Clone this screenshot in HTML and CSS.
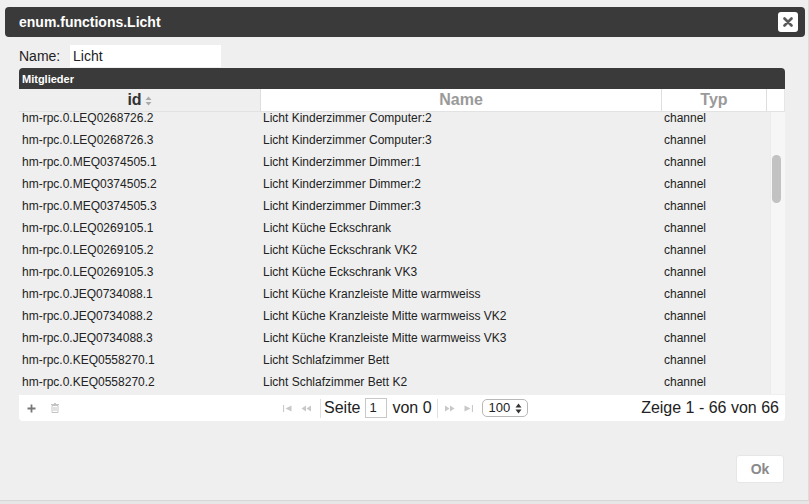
FILE: index.html
```html
<!DOCTYPE html>
<html>
<head>
<meta charset="utf-8">
<link rel="stylesheet" href="styles.css">
</head>
<body>
<div class="dialog">
  <div class="titlebar">
    <span class="title">enum.functions.Licht</span>
    <button class="close" aria-label="close">
      <svg width="10" height="10" viewBox="0 0 10 10"><path d="M1.5 1.5 L8.5 8.5 M8.5 1.5 L1.5 8.5" stroke="#5a5a5a" stroke-width="2.6" stroke-linecap="round"/></svg>
    </button>
  </div>
  <div class="content">
    <div class="name-row">
      <label class="name-label">Name:</label>
      <div class="name-input">Licht</div>
    </div>
    <div class="grid">
      <div class="caption">Mitglieder</div>
      <div class="head">
        <div class="hcell hid">id<svg class="sort" width="7" height="10" viewBox="0 0 7 10"><path d="M0.5 4 L3.5 0.5 L6.5 4 Z M0.5 6 L3.5 9.5 L6.5 6 Z" fill="#aaa"/></svg></div>
        <div class="hcell">Name</div>
        <div class="hcell">Typ</div>
        <div class="hcell hlast"></div>
      </div>
      <div class="body">
        <div class="rows">
          <div class="rows-inner">
            <div class="row"><span>hm-rpc.0.LEQ0268726.2</span><span>Licht Kinderzimmer Computer:2</span><span>channel</span></div>
            <div class="row"><span>hm-rpc.0.LEQ0268726.3</span><span>Licht Kinderzimmer Computer:3</span><span>channel</span></div>
            <div class="row"><span>hm-rpc.0.MEQ0374505.1</span><span>Licht Kinderzimmer Dimmer:1</span><span>channel</span></div>
            <div class="row"><span>hm-rpc.0.MEQ0374505.2</span><span>Licht Kinderzimmer Dimmer:2</span><span>channel</span></div>
            <div class="row"><span>hm-rpc.0.MEQ0374505.3</span><span>Licht Kinderzimmer Dimmer:3</span><span>channel</span></div>
            <div class="row"><span>hm-rpc.0.LEQ0269105.1</span><span>Licht Küche Eckschrank</span><span>channel</span></div>
            <div class="row"><span>hm-rpc.0.LEQ0269105.2</span><span>Licht Küche Eckschrank VK2</span><span>channel</span></div>
            <div class="row"><span>hm-rpc.0.LEQ0269105.3</span><span>Licht Küche Eckschrank VK3</span><span>channel</span></div>
            <div class="row"><span>hm-rpc.0.JEQ0734088.1</span><span>Licht Küche Kranzleiste Mitte warmweiss</span><span>channel</span></div>
            <div class="row"><span>hm-rpc.0.JEQ0734088.2</span><span>Licht Küche Kranzleiste Mitte warmweiss VK2</span><span>channel</span></div>
            <div class="row"><span>hm-rpc.0.JEQ0734088.3</span><span>Licht Küche Kranzleiste Mitte warmweiss VK3</span><span>channel</span></div>
            <div class="row"><span>hm-rpc.0.KEQ0558270.1</span><span>Licht Schlafzimmer Bett</span><span>channel</span></div>
            <div class="row"><span>hm-rpc.0.KEQ0558270.2</span><span>Licht Schlafzimmer Bett K2</span><span>channel</span></div>
          </div>
        </div>
        <div class="scrollbar"><div class="thumb"></div></div>
      </div>
      <div class="footer">
        <div class="foot-left">
          <svg class="plus" width="9" height="9" viewBox="0 0 9 9"><path d="M4.5 0.5 V8.5 M0.5 4.5 H8.5" stroke="#777" stroke-width="1.8"/></svg>
          <svg class="trash" width="8" height="10" viewBox="0 0 8 10"><path d="M0 1.5 H8 M3 0.5 H5 M1 2.5 H7 V9.5 H1 Z M3 4 V8 M5 4 V8" stroke="#c4c4c4" stroke-width="1" fill="none"/></svg>
        </div>
        <div class="pager">
          <svg class="pico p-first" width="9" height="7" viewBox="0 0 9 7"><path d="M0.5 0 V7" stroke="#c8c8c8" stroke-width="1.2"/><path d="M8.5 0.5 L2.5 3.5 L8.5 6.5 Z" fill="#c8c8c8"/></svg>
          <svg class="pico p-prev" width="10" height="7" viewBox="0 0 10 7"><path d="M5 0.5 L0.5 3.5 L5 6.5 Z M10 0.5 L5.5 3.5 L10 6.5 Z" fill="#c8c8c8"/></svg>
          <span class="sep"></span>
          <span class="ptext">Seite</span>
          <span class="pinput">1</span>
          <span class="ptext pvon">von 0</span>
          <span class="sep sep2"></span>
          <svg class="pico p-next" width="10" height="7" viewBox="0 0 10 7"><path d="M0 0.5 L4.5 3.5 L0 6.5 Z M5 0.5 L9.5 3.5 L5 6.5 Z" fill="#c8c8c8"/></svg>
          <svg class="pico p-last" width="9" height="7" viewBox="0 0 9 7"><path d="M0.5 0.5 L6.5 3.5 L0.5 6.5 Z" fill="#c8c8c8"/><path d="M8.5 0 V7" stroke="#c8c8c8" stroke-width="1.2"/></svg>
          <span class="pselect"><span class="psel-val">100</span><svg width="7" height="11" viewBox="0 0 7 11"><path d="M0.5 4.5 L3.5 0.5 L6.5 4.5 Z M0.5 6.5 L3.5 10.5 L6.5 6.5 Z" fill="#333"/></svg></span>
        </div>
        <div class="foot-right">Zeige 1 - 66 von 66</div>
      </div>
    </div>
    <div class="actions">
      <button class="ok">Ok</button>
    </div>
  </div>
</div>
</body>
</html>
```

FILE: styles.css
```css
html, body {
  margin: 0;
  padding: 0;
}
body {
  background: #e6e6e6;
  font-family: "Liberation Sans", Arial, sans-serif;
  color: #222;
}
.dialog {
  width: 809px;
  height: 501px;
  box-sizing: border-box;
  background: #efefef;
  border-right: 1px solid #d8dde2;
  border-bottom: 1px solid #d6d6d6;
  padding-top: 7px;
  display: flex;
  flex-direction: column;
}
.titlebar {
  margin: 0 3px 0 5px;
  height: 30px;
  background: #3a3a3a;
  border-radius: 4px;
  display: flex;
  align-items: center;
  justify-content: space-between;
  padding-left: 14px;
  padding-right: 7px;
}
.title {
  color: #fff;
  font-weight: bold;
  font-size: 14px;
}
.close {
  width: 20px;
  height: 20px;
  padding: 0;
  border: none;
  border-radius: 3px;
  background: #fff;
  display: flex;
  align-items: center;
  justify-content: center;
}
.content {
  padding: 0 24px 0 19px;
  display: flex;
  flex-direction: column;
}
.name-row {
  margin-top: 8px;
  display: flex;
  align-items: center;
  height: 22px;
}
.name-label {
  font-size: 14px;
  width: 51px;
  color: #222;
}
.name-input {
  width: 148px;
  height: 22px;
  background: #fff;
  font-size: 14px;
  line-height: 22px;
  padding-left: 3px;
}
.grid {
  margin-top: 1px;
  width: 766px;
}
.caption {
  height: 21px;
  background: #3a3a3a;
  border-radius: 4px 4px 0 0;
  color: #fff;
  font-weight: bold;
  font-size: 11px;
  line-height: 22px;
  padding-left: 3px;
}
.head {
  display: grid;
  grid-template-columns: 242px 401px 105px 18px;
  height: 23px;
  background: #fff;
  border-bottom: 1px solid #e2e2e2;
  box-sizing: border-box;
}
.hcell {
  border-right: 1px solid #dedede;
  font-size: 16px;
  font-weight: bold;
  color: #9a9a9a;
  text-align: center;
  line-height: 22px;
}
.hid {
  background: #efefef;
  color: #333;
  display: flex;
  align-items: center;
  justify-content: center;
  gap: 3px;
}
.sort {
  margin-top: 1px;
}
.hlast {
  border-right: 1px solid #e6e6e6;
}
.body {
  display: flex;
  height: 282px;
  background: #efefef;
}
.rows {
  flex: 1;
  overflow: hidden;
}
.rows-inner {
  margin-top: -5px;
}
.row {
  display: grid;
  grid-template-columns: 242px 401px 105px;
  height: 22px;
  line-height: 22px;
  font-size: 12px;
  color: #222;
}
.row span {
  padding-left: 2px;
  white-space: nowrap;
  overflow: hidden;
}
.row span:first-child {
  padding-left: 3px;
}
.scrollbar {
  width: 14px;
  margin-left: 4px;
  background: #f6f6f6;
  border-left: 1px solid #ebebeb;
  position: relative;
}
.thumb {
  position: absolute;
  left: 1px;
  top: 43px;
  width: 9px;
  height: 48px;
  border-radius: 5px;
  background: #c2c2c2;
}
.footer {
  margin-top: 1px;
  height: 26px;
  background: #fff;
  border-radius: 0 0 4px 4px;
  display: flex;
  align-items: center;
}
.foot-left {
  width: 264px;
  display: flex;
  align-items: center;
  padding-left: 8px;
  box-sizing: border-box;
}
.trash {
  margin-left: 15px;
}
.pager {
  display: flex;
  align-items: center;
}
.pico {
  display: block;
}
.p-first {
  margin-right: 9px;
}
.p-prev {
  margin-right: 9px;
}
.sep {
  width: 1px;
  height: 19px;
  background: #e0e0e0;
  margin-right: 3px;
}
.sep2 {
  margin-left: 5px;
  margin-right: 7px;
}
.ptext {
  font-size: 16px;
  line-height: 20px;
  color: #222;
}
.pinput {
  width: 22px;
  height: 20px;
  margin-left: 5px;
  border: 1px solid #c8c8c8;
  box-sizing: border-box;
  font-size: 13px;
  line-height: 18px;
  padding-left: 3px;
}
.pvon {
  margin-left: 5px;
}
.p-next {
  margin-right: 9px;
}
.p-last {
  margin-right: 9px;
}
.pselect {
  width: 46px;
  height: 18px;
  box-sizing: border-box;
  border: 1px solid #b8b8b8;
  border-radius: 5px;
  padding-left: 6px;
  display: flex;
  align-items: center;
  gap: 5px;
}
.psel-val {
  font-size: 13px;
  line-height: 16px;
}
.foot-right {
  margin-left: auto;
  padding-right: 6px;
  font-size: 16px;
  line-height: 20px;
  color: #222;
}
.actions {
  display: flex;
  justify-content: flex-end;
  margin-top: 34px;
  width: 765px;
}
.ok {
  width: 48px;
  height: 28px;
  background: #fff;
  border: 1px solid #e6e6e6;
  border-radius: 3px;
  font-family: "Liberation Sans", Arial, sans-serif;
  font-weight: bold;
  font-size: 14px;
  color: #8a8a8a;
  padding: 0;
}
```
